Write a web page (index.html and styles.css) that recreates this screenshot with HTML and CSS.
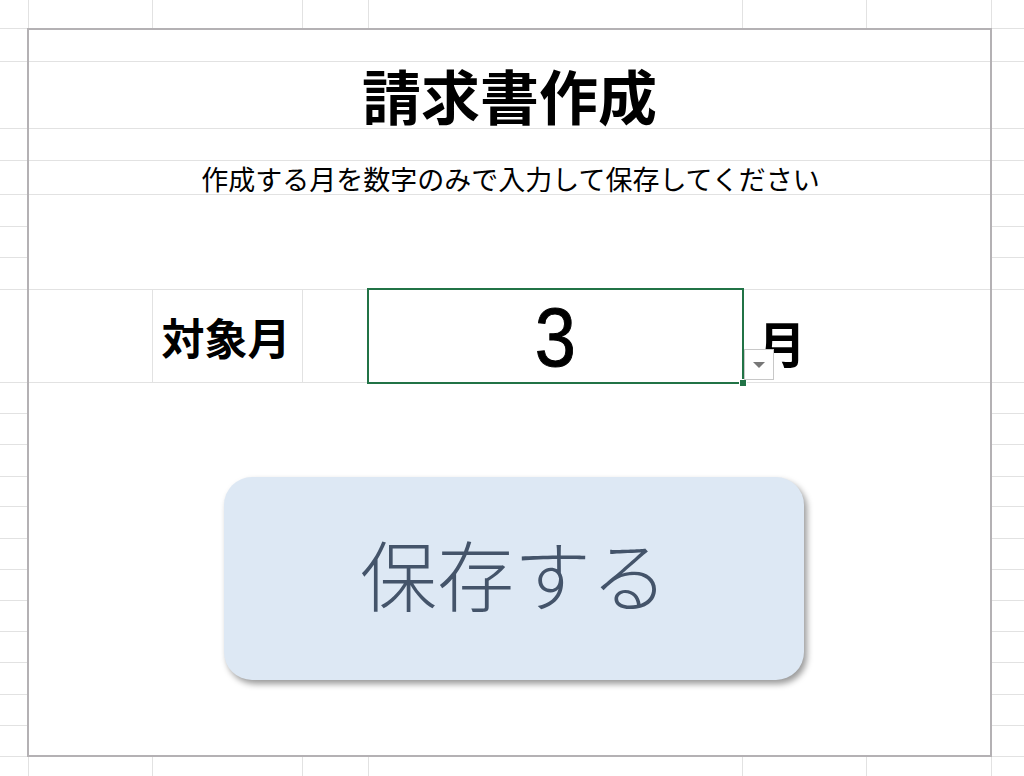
FILE: index.html
```html
<!DOCTYPE html>
<html lang="ja">
<head>
    <meta charset="UTF-8">
    <meta name="viewport" content="width=device-width, initial-scale=1.0">
    <title>請求書作成</title>
    <link rel="stylesheet" href="styles.css">
</head>
<body>
    <div class="sheet-form">
        <div class="row-blank row-top"></div>
        <div class="title-row">
            <h1>請求書作成</h1>
        </div>
        <div class="row-blank row-gap"></div>
        <div class="lead-row">
            <p>作成する月を数字のみで入力して保存してください</p>
        </div>
        <div class="row-spacer"></div>
        <div class="month-row">
            <div class="month-cell"></div>
            <div class="month-cell month-label">対象月</div>
            <div class="month-cell"></div>
            <div class="month-input">
                <span class="month-value">3</span>
                <span class="fill-handle"></span>
                <span class="dropdown-btn"><span class="dropdown-arrow"></span></span>
            </div>
            <div class="month-cell month-unit">月</div>
        </div>
        <div class="save-wrap">
            <button class="save-btn" type="button">保存する</button>
        </div>
    </div>
</body>
</html>
```

FILE: styles.css
```css
body {
    --grid: linear-gradient(#e2e2e2, #e2e2e2);
    font-family: "Noto Sans CJK JP", sans-serif;
    margin: 0;
    padding: 0;
    width: 1024px;
    height: 776px;
    overflow: hidden;
    color: #000;
    background-color: #fff;
    background-image:
        var(--grid), var(--grid), var(--grid), var(--grid), var(--grid), var(--grid), var(--grid),
        var(--grid), var(--grid), var(--grid), var(--grid), var(--grid), var(--grid), var(--grid),
        var(--grid), var(--grid), var(--grid), var(--grid), var(--grid), var(--grid), var(--grid),
        var(--grid), var(--grid), var(--grid), var(--grid), var(--grid), var(--grid), var(--grid);
    background-repeat: no-repeat;
    background-size:
        1px 100%, 1px 100%, 1px 100%, 1px 100%, 1px 100%, 1px 100%, 1px 100%,
        100% 1px, 100% 1px, 100% 1px, 100% 1px, 100% 1px, 100% 1px, 100% 1px,
        100% 1px, 100% 1px, 100% 1px, 100% 1px, 100% 1px, 100% 1px, 100% 1px,
        100% 1px, 100% 1px, 100% 1px, 100% 1px, 100% 1px, 100% 1px, 100% 1px;
    background-position:
        28px 0, 152px 0, 302px 0, 368px 0, 742px 0, 866px 0, 991px 0,
        0 28px, 0 61px, 0 128px, 0 160px, 0 194px, 0 226px, 0 257px,
        0 289px, 0 382px, 0 413px, 0 444px, 0 476px, 0 506px, 0 538px,
        0 569px, 0 600px, 0 631px, 0 662px, 0 694px, 0 725px, 0 756px;
}

.sheet-form {
    margin: 28px 0 0 27px;
    width: 961px;
    height: 725px;
    border: 2px solid #b4b1b4;
    background-color: #fff;
}

.row-blank,
.title-row,
.lead-row {
    border-bottom: 1px solid #e2e2e2;
}

.row-top {
    height: 31px;
}

.title-row {
    height: 66px;
    display: flex;
    justify-content: center;
    align-items: flex-end;
}

.title-row h1 {
    margin: 0 0 4px 0;
    font-size: 59px;
    font-weight: 700;
    line-height: 59px;
}

.row-gap {
    height: 31px;
}

.lead-row {
    height: 33px;
    display: flex;
    justify-content: center;
    align-items: flex-end;
}

.lead-row p {
    margin: 0 0 2px 2px;
    font-size: 27px;
    line-height: 27px;
}

.row-spacer {
    height: 94px;
}

.month-row {
    height: 92px;
    display: grid;
    grid-template-columns: 123px 151px 64px 377px 1fr;
    border-top: 1px solid #e2e2e2;
    border-bottom: 1px solid #e2e2e2;
}

.month-label {
    border-left: 1px solid #e2e2e2;
    border-right: 1px solid #e2e2e2;
    display: flex;
    justify-content: center;
    align-items: center;
    font-size: 43px;
    font-weight: 700;
    padding-right: 3px;
}

.month-input {
    position: relative;
    margin: -2px 0;
    border: 2px solid #217346;
    display: flex;
    justify-content: center;
    align-items: center;
}

.month-value {
    font-family: "Liberation Sans", Arial, sans-serif;
    font-size: 84px;
    line-height: 1;
    margin-top: 2px;
    display: inline-block;
    transform: scaleX(0.88);
    -webkit-text-stroke: 1px #000;
}

.fill-handle {
    position: absolute;
    right: -5px;
    bottom: -5px;
    width: 6px;
    height: 6px;
    background-color: #217346;
    border: 1px solid #fff;
}

.dropdown-btn {
    position: absolute;
    left: 375px;
    top: 59px;
    width: 28px;
    height: 29px;
    border: 1px solid #c8c8c8;
    background-color: #fff;
    display: flex;
    justify-content: center;
    align-items: center;
}

.dropdown-arrow {
    width: 0;
    height: 0;
    border-left: 6px solid transparent;
    border-right: 6px solid transparent;
    border-top: 6px solid #777;
}

.month-unit {
    display: flex;
    align-items: center;
    padding: 10px 0 0 13px;
    font-size: 49px;
    font-weight: 700;
}

.save-wrap {
    padding: 94px 0 0 195px;
}

.save-btn {
    display: flex;
    justify-content: center;
    align-items: center;
    width: 580px;
    height: 203px;
    padding: 0 0 12px;
    border: none;
    border-radius: 28px;
    background-color: #dde8f4;
    box-shadow: 3px 4px 6px rgba(0, 0, 0, 0.4);
    font-family: "Noto Sans CJK JP", sans-serif;
    font-size: 77px;
    font-weight: 300;
    color: #44546a;
}
```
